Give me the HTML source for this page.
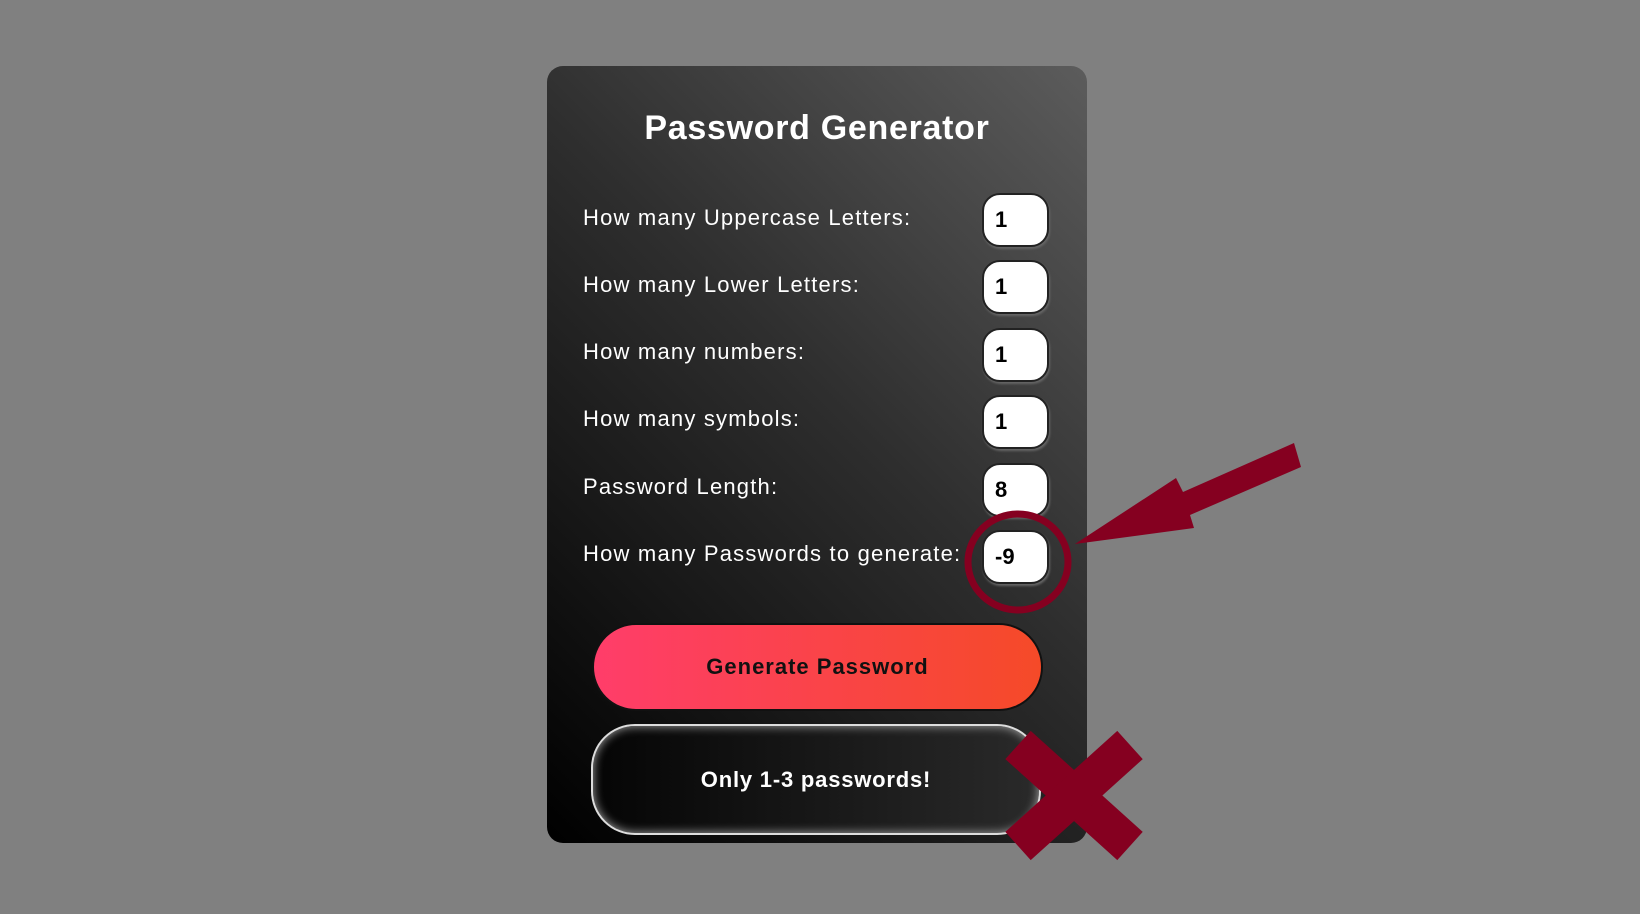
<!DOCTYPE html>
<html><head><style>
html,body{margin:0;width:1640px;height:914px;background:#808080;overflow:hidden;font-family:"Liberation Sans",sans-serif}
.card{position:absolute;left:547px;top:66px;width:540px;height:777px;border-radius:16px;background:linear-gradient(225deg,#5c5c5c 0%,#2e2e2e 45%,#000 100%)}
h1{position:absolute;top:109px;margin:0;text-align:center;color:#fff;font-size:34px;font-weight:bold;letter-spacing:0.7px}
.lbl{position:absolute;left:583px;color:#fff;font-size:22px;letter-spacing:1.2px;transform:translateY(-50%);white-space:nowrap}
.inp{position:absolute;left:982px;width:67px;height:54px;box-sizing:border-box;background:#fff;border:2px solid #222;border-radius:18px;box-shadow:1px 2px 2px #666;font-size:22px;font-weight:bold;color:#000;line-height:50px;padding-left:11px}
.gen{position:absolute;left:592px;top:623px;width:451px;height:88px;box-sizing:border-box;border:2px solid #111;border-radius:44px;background:linear-gradient(90deg,#ff3d6a,#f54a28);text-align:center;line-height:84px;font-size:22px;font-weight:bold;color:#111;letter-spacing:1px}
.err{position:absolute;left:591px;top:724px;width:450px;height:111px;box-sizing:border-box;border:2px solid #ddd;border-radius:44px;background:linear-gradient(90deg,#050505,#2a2a2a);box-shadow:inset 0 0 10px #aaa;text-align:center;line-height:107px;font-size:22px;font-weight:bold;color:#fff;letter-spacing:0.8px}
</style></head><body>
<div class="card"></div>
<h1 style="left:0;width:1634px">Password Generator</h1>
<div class="lbl" style="top:218px">How many Uppercase Letters:</div>
<div class="lbl" style="top:285px">How many Lower Letters:</div>
<div class="lbl" style="top:352px">How many numbers:</div>
<div class="lbl" style="top:419px">How many symbols:</div>
<div class="lbl" style="top:487px">Password Length:</div>
<div class="lbl" style="top:554px">How many Passwords to generate:</div>
<div class="inp" style="top:193px">1</div>
<div class="inp" style="top:260px">1</div>
<div class="inp" style="top:328px">1</div>
<div class="inp" style="top:395px">1</div>
<div class="inp" style="top:463px">8</div>
<div class="inp" style="top:530px">-9</div>
<div class="gen">Generate Password</div>
<div class="err">Only 1-3 passwords!</div>
<svg width="1640" height="914" style="position:absolute;left:0;top:0">
<ellipse cx="1018" cy="562" rx="50" ry="48" fill="none" stroke="#850020" stroke-width="7"/>
<polygon fill="#850020" points="1075,544 1176,478 1183,492 1294,443 1301,467 1190,515 1194,528"/>
<g stroke="#850020" stroke-width="38"><line x1="1018" y1="745" x2="1130" y2="846"/><line x1="1130" y1="745" x2="1018" y2="846"/></g>
</svg>
</body></html>
